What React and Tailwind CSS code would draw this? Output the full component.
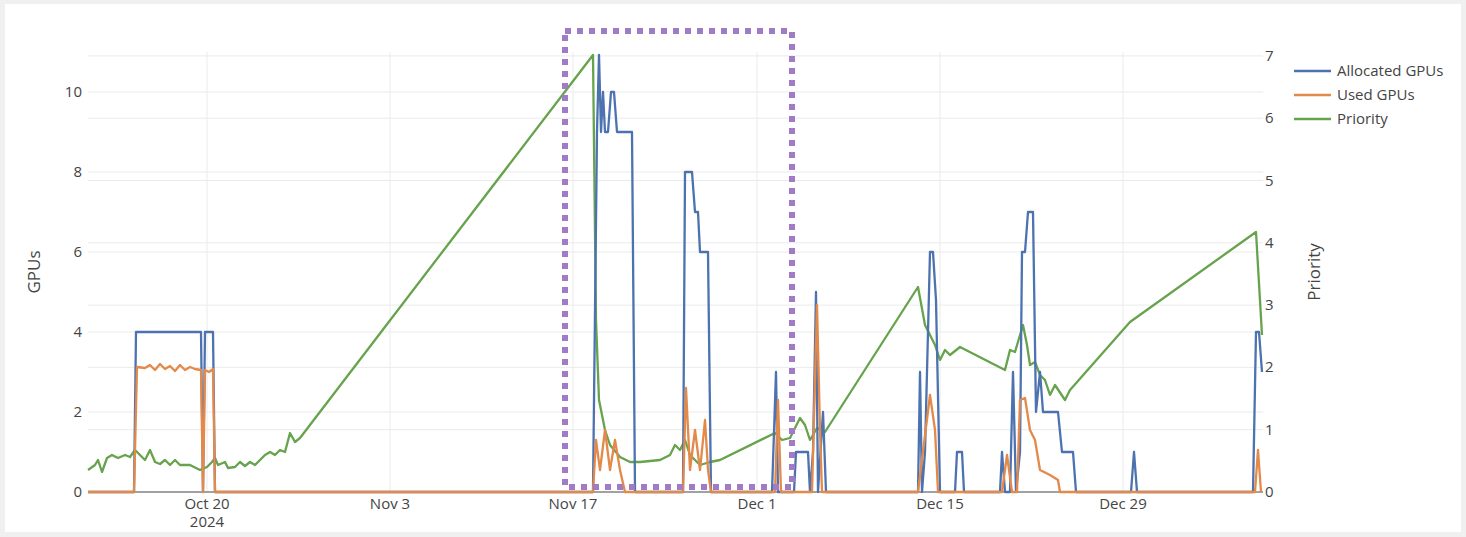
import React from 'react'

const py = p => 492 - 62.3 * p
const gy = g => 492 - 40 * g

const priority = '88,470 95,465 98,460 102,472 107,458 112,455 118,458 125,455 130,457 135,450 140,455 145,460 150,450 155,462 160,464 165,460 170,465 175,460 180,465 190,465 200,470 207,467 212,462 215,458 218,465 225,462 228,468 235,467 240,462 245,466 250,462 255,465 260,460 265,455 270,452 275,455 280,450 285,452 290,433 295,442 300,438 593,55 596,320 599,400 605,430 610,445 620,457 630,462 640,462 660,460 670,455 675,445 680,450 685,440 690,455 700,465 710,462 720,460 775,433 782,440 790,438 800,418 805,425 810,440 817,428 825,432 918,287 925,325 935,345 940,360 945,350 950,355 960,347 1005,370 1010,350 1015,352 1020,335 1023,325 1027,345 1030,365 1035,362 1040,375 1045,380 1050,395 1055,385 1065,400 1070,390 1130,322 1256,232 1262,335'

const allocated = '88,492 134,492 136,332 201,332 203,492 205,332 213,332 215,492 593,492 597,132 599,55 601,132 603,92 605,132 608,132 611,92 614,92 617,132 620,132 632,132 635,492 683,492 685,172 692,172 695,212 698,212 700,252 708,252 711,492 772,492 776,372 778,492 794,492 796,452 808,452 810,492 813,452 816,292 818,492 823,412 826,492 918,492 920,372 922,492 925,452 930,252 933,252 936,300 940,492 955,492 957,452 962,452 964,492 1000,492 1002,452 1005,492 1010,492 1013,372 1016,492 1020,452 1022,252 1025,252 1028,212 1033,212 1036,412 1040,372 1043,412 1058,412 1062,452 1073,452 1076,492 1131,492 1134,452 1137,492 1253,492 1256,332 1259,332 1262,372'

const used = '88,492 134,492 137,367 145,368 150,365 155,370 160,364 165,369 170,366 175,371 180,365 185,370 190,367 195,369 201,370 203,492 205,370 209,372 213,369 215,492 593,492 596,440 600,470 605,430 610,470 615,440 620,470 625,492 683,492 686,388 690,470 695,430 700,470 705,420 708,470 711,492 775,492 778,400 781,492 812,492 817,305 820,430 822,492 918,492 930,395 935,430 938,492 1002,492 1007,455 1012,492 1017,492 1020,400 1025,398 1030,430 1035,440 1040,470 1050,475 1058,480 1060,492 1255,492 1258,450 1261,492'

const xTicks = [['Oct 20', 207], ['Nov 3', 390], ['Nov 17', 573], ['Dec 1', 757], ['Dec 15', 940], ['Dec 29', 1123]]

export default function App() {
  return (
    <div className="w-[1466px] h-[537px] bg-[#f0f0f0] p-[4px_5px_5px_5px]" style={{ fontFamily: '"Open Sans", sans-serif' }}>
      <div className="bg-white w-[1456px] h-[528px]">
        <svg width="1456" height="528" viewBox="5 4 1456 528" className="block">
          {xTicks.map(([, x]) => <line key={x} x1={x} x2={x} y1="52" y2="492" stroke="#ebebeb" />)}
          {[1, 2, 3, 4, 5, 6, 7].map(p => <line key={'p' + p} x1="88" x2="1263" y1={py(p)} y2={py(p)} stroke="#ebebeb" />)}
          {[2, 4, 6, 8, 10].map(g => <line key={'g' + g} x1="88" x2="1263" y1={gy(g)} y2={gy(g)} stroke="#ebebeb" />)}
          <line x1="88" x2="1263" y1="492" y2="492" stroke="#444" />
          <g fill="#444" fontSize="15">
            {[0, 2, 4, 6, 8, 10].map(g => <text key={g} x="82" y={gy(g) + 5} textAnchor="end">{g}</text>)}
            {[0, 1, 2, 3, 4, 5, 6, 7].map(p => <text key={p} x="1265" y={py(p) + 5}>{p}</text>)}
            {xTicks.map(([t, x]) => <text key={t} x={x} y="509" textAnchor="middle">{t}</text>)}
            <text x="207" y="527" textAnchor="middle">2024</text>
            <text transform="translate(40 272) rotate(-90)" textAnchor="middle" fontSize="17">GPUs</text>
            <text transform="translate(1320 272) rotate(-90)" textAnchor="middle" fontSize="17">Priority</text>
          </g>
          <g fill="none" strokeWidth="2.3" strokeLinejoin="round">
            <polyline points={priority} stroke="#66a34c" />
            <polyline points={allocated} stroke="#4c72b0" />
            <polyline points={used} stroke="#e3894a" />
          </g>
          <rect x="565" y="31" width="227" height="456" fill="none" stroke="#a07cc6" strokeWidth="6" strokeDasharray="6 6" />
          <g fontSize="15" fill="#444">
            {[['Allocated GPUs', '#4c72b0'], ['Used GPUs', '#e3894a'], ['Priority', '#66a34c']].map(([t, c], i) => (
              <g key={t}>
                <line x1="1294" x2="1331" y1={71 + i * 24} y2={71 + i * 24} stroke={c} strokeWidth="2.3" />
                <text x="1337" y={76 + i * 24}>{t}</text>
              </g>
            ))}
          </g>
        </svg>
      </div>
    </div>
  )
}
